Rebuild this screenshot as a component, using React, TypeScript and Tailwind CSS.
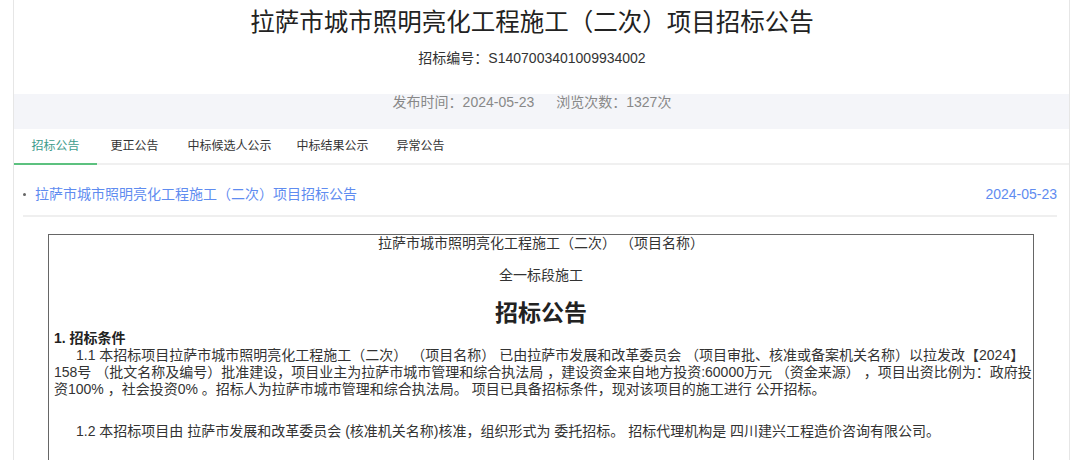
export default function App() {
  const tabs = [
    { name: "招标公告", w: "w-[83px]", active: true },
    { name: "更正公告", w: "w-[75px]" },
    { name: "中标候选人公示", w: "w-[115px]" },
    { name: "中标结果公示", w: "w-[91px]" },
    { name: "异常公告", w: "w-[85px]" },
  ];

  return (
    <div className="h-[460px] overflow-hidden bg-white font-['Liberation_Sans','Noto_Sans_CJK_SC',sans-serif] text-[#333]">
      <div className="ml-[13px] w-[1057px] min-h-[460px] border-x border-[#e6e6e6]">
        {/* 标题 */}
        <div className="pr-[19px] pt-[6px] text-center">
          <h1 className="text-[24.5px] leading-[34px] text-[#222]">
            拉萨市城市照明亮化工程施工（二次）项目招标公告
          </h1>
          <p className="mt-[8px] text-[14px] leading-[20px]">
            招标编号：S1407003401009934002
          </p>
        </div>

        <div className="mt-[26px] h-[35px] bg-[#f4f5f9] pr-[19px] text-center text-[14px] leading-[16px] text-[#888]">
          发布时间：2024-05-23<span className="ml-[22px]">浏览次数：1327次</span>
        </div>

        {/* 标签 */}
        <div className="flex border-b-2 border-[#f0f0f0]">
          {tabs.map((t) => (
            <div
              key={t.name}
              className={`${t.w} -mb-[2px] flex h-[36px] items-center justify-center border-b-2 text-[12px] ${
                t.active
                  ? "border-[#5cc17f] text-[#3d9c8c]"
                  : "border-transparent text-[#333]"
              }`}
            >
              {t.name}
            </div>
          ))}
        </div>

        {/* 列表 */}
        <div className="pl-[9px] pr-[12px]">
          <div className="flex items-center justify-between border-b-2 border-[#efefef] pb-[11px] pt-[19px] text-[14px] leading-[20px] text-[#5f8cf0]">
            <div className="flex items-center">
              <span className="h-[3px] w-[3px] rounded-full bg-[#666]" />
              <span className="ml-[9px]">拉萨市城市照明亮化工程施工（二次）项目招标公告</span>
            </div>
            <span>2024-05-23</span>
          </div>
        </div>

        {/* 正文 */}
        <div className="ml-[34px] mt-[17px] w-[986px] border border-[#666] px-[5px] pb-[40px] text-[14px]">
          <p className="text-center leading-[16px]">拉萨市城市照明亮化工程施工（二次） （项目名称）</p>
          <p className="mt-[16px] text-center leading-[16px]">全一标段施工</p>
          <p className="mt-[15px] text-center text-[23px] font-bold leading-[30px] text-[#222]">招标公告</p>
          <p className="mt-[2px] font-bold leading-[17px] text-[#222]">1. 招标条件</p>
          <p className="whitespace-nowrap leading-[17px]">
            <span className="pl-[22px]">1.1 本招标项目拉萨市城市照明亮化工程施工（二次） （项目名称） 已由拉萨市发展和改革委员会 （项目审批、核准或备案机关名称）以拉发改【2024】</span>
            <br />
            158号 （批文名称及编号）批准建设，项目业主为拉萨市城市管理和综合执法局 ，建设资金来自地方投资:60000万元 （资金来源） ，项目出资比例为：政府投
            <br />
            资100% ，社会投资0% 。招标人为拉萨市城市管理和综合执法局。 项目已具备招标条件，现对该项目的施工进行 公开招标。
          </p>
          <p className="mt-[25px] whitespace-nowrap pl-[22px] leading-[17px]">
            1.2 本招标项目由 拉萨市发展和改革委员会 (核准机关名称)核准，组织形式为 委托招标。 招标代理机构是 四川建兴工程造价咨询有限公司。
          </p>
        </div>
      </div>
    </div>
  );
}
